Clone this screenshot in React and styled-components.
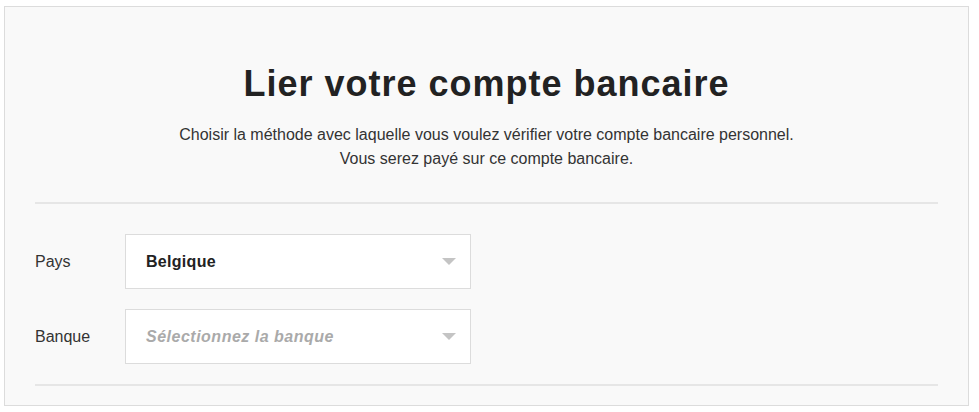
import styled, { createGlobalStyle } from "styled-components";

const GlobalStyle = createGlobalStyle`
  body {
    margin: 0;
    background: #fff;
    font-family: "Liberation Sans", Arial, sans-serif;
  }
`;

const Page = styled.div`
  padding: 6px 10px 6px 4px;
`;

const Card = styled.section`
  box-sizing: border-box;
  width: 965px;
  height: 400px;
  background: #f9f9f9;
  border: 1px solid #dcdcdc;
  padding: 0 30px;
`;

const Header = styled.header`
  text-align: center;
  padding: 55px 0 31px;
  border-bottom: 2px solid #e6e6e6;
  h1 {
    margin: 0 0 17px;
    font-size: 36px;
    line-height: 44px;
    font-weight: 700;
    letter-spacing: 1px;
    color: #222;
  }
  p {
    margin: 0;
    font-size: 16px;
    line-height: 24px;
    color: #333;
  }
`;

const Form = styled.div`
  display: flex;
  flex-direction: column;
  gap: 20px;
  padding: 30px 0 20px;
  border-bottom: 2px solid #e6e6e6;
`;

const Row = styled.div`
  display: flex;
  align-items: center;
`;

const Label = styled.label`
  width: 90px;
  font-size: 16px;
  color: #333;
`;

const Select = styled.div`
  box-sizing: border-box;
  width: 346px;
  height: 55px;
  background: #fff;
  border: 1px solid #dcdcdc;
  display: flex;
  align-items: center;
  justify-content: space-between;
  padding: 0 14px 0 20px;
  font-size: 16px;
  font-weight: 700;
  font-style: ${(p) => (p.$placeholder ? "italic" : "normal")};
  color: ${(p) => (p.$placeholder ? "#aaa" : "#222")};
  letter-spacing: ${(p) => (p.$placeholder ? "0.5px" : "0.3px")};
`;

const Arrow = styled.span`
  width: 0;
  height: 0;
  border-left: 7px solid transparent;
  border-right: 7px solid transparent;
  border-top: 7px solid #c4c4c4;
`;

export default function App() {
  return (
    <>
      <GlobalStyle />
      <Page>
        <Card>
          <Header>
            <h1>Lier votre compte bancaire</h1>
            <p>
              Choisir la méthode avec laquelle vous voulez vérifier votre compte bancaire personnel.
              <br />
              Vous serez payé sur ce compte bancaire.
            </p>
          </Header>
          <Form>
            <Row>
              <Label>Pays</Label>
              <Select>
                Belgique
                <Arrow />
              </Select>
            </Row>
            <Row>
              <Label>Banque</Label>
              <Select $placeholder>
                Sélectionnez la banque
                <Arrow />
              </Select>
            </Row>
          </Form>
        </Card>
      </Page>
    </>
  );
}
